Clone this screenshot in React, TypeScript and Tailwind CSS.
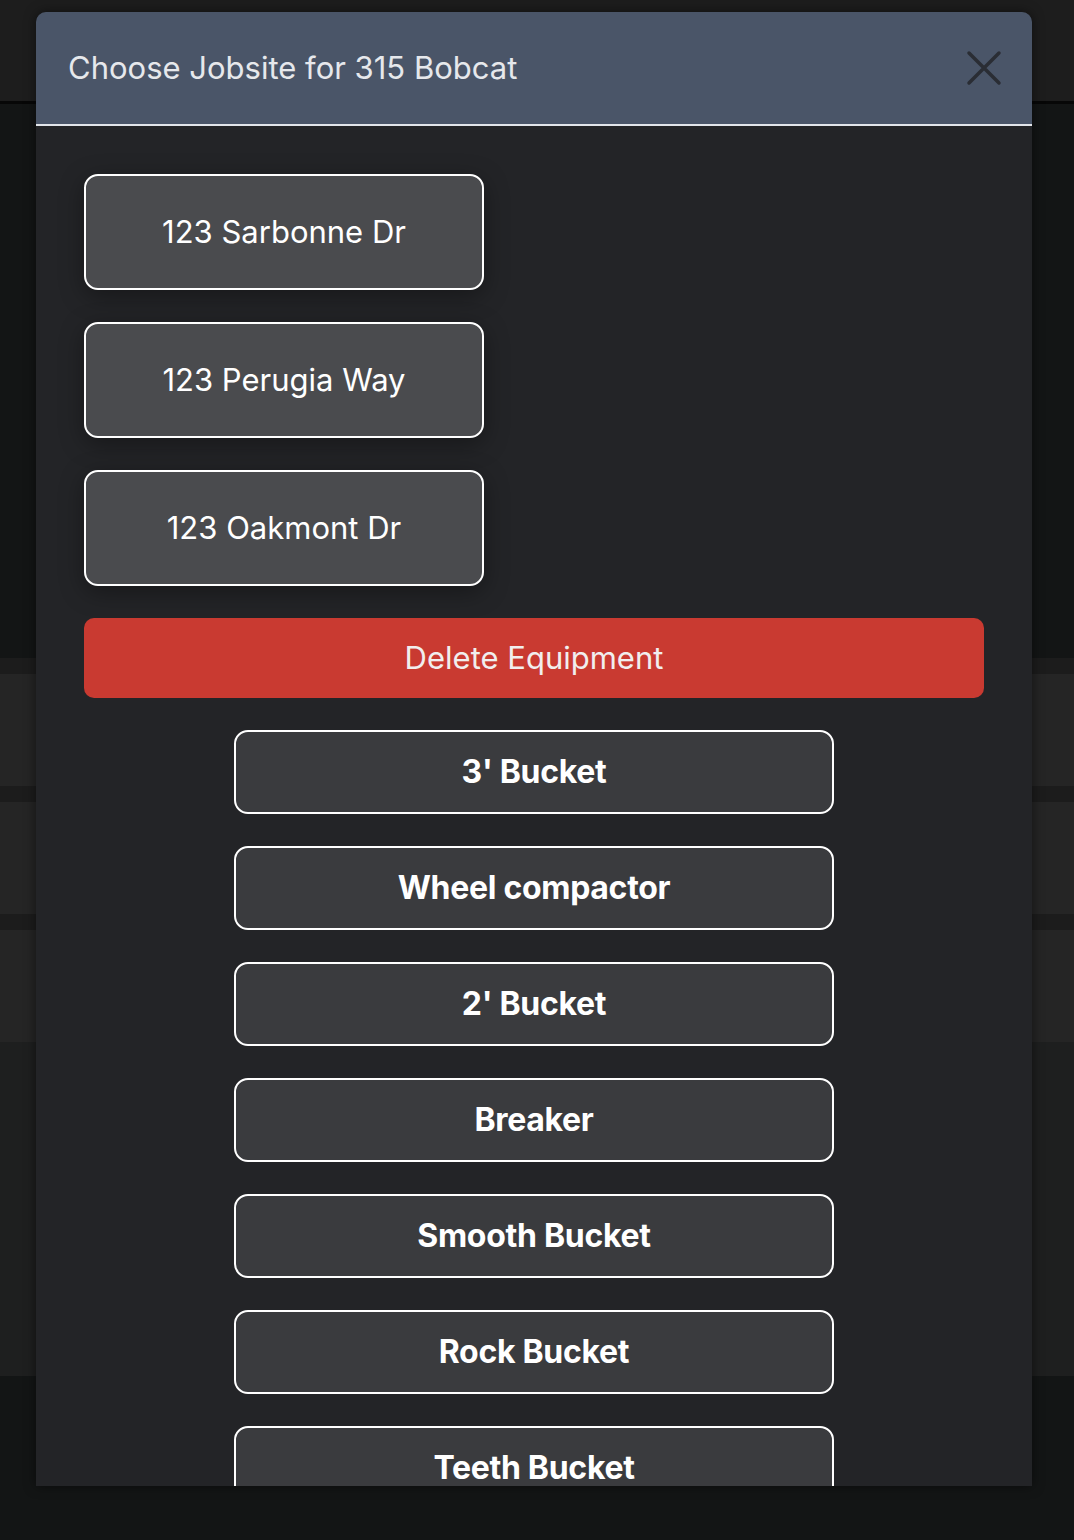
import React from 'react';

const jobsites = ['123 Sarbonne Dr', '123 Perugia Way', '123 Oakmont Dr'];
const equipment = [
  "3' Bucket",
  'Wheel compactor',
  "2' Bucket",
  'Breaker',
  'Smooth Bucket',
  'Rock Bucket',
  'Teeth Bucket',
];

const Backdrop: React.FC = () => (
  <div className="flex flex-col">
    <div className="h-[101px] bg-[#1d1d1d]" />
    <div className="h-[3px] bg-[#070707]" />
    <div className="h-[554px]" />
    <div className="h-[16px] bg-[#1c1c1c]" />
    <div className="h-[112px] bg-[#252525]" />
    <div className="h-[16px] bg-[#1c1c1c]" />
    <div className="h-[112px] bg-[#252525]" />
    <div className="h-[16px] bg-[#1c1c1c]" />
    <div className="h-[112px] bg-[#252525]" />
    <div className="h-[334px] bg-[#1e1f1f]" />
  </div>
);

const App: React.FC = () => {
  return (
    <div
      className="relative w-full h-[1540px] overflow-hidden bg-[#131515]"
      style={{ fontFamily: 'Inter, "Noto Sans", sans-serif' }}
    >
      <Backdrop />

      <div className="absolute left-[36px] top-[12px] w-[996px] h-[1474px] overflow-hidden rounded-t-[10px] bg-[#232427] shadow-[0_0_12px_rgba(0,0,0,0.5)]">
        <div className="flex items-center justify-between h-[114px] pl-[32px] pr-[30px] bg-[#4a5568] border-b-2 border-[#e2e5ea]">
          <h2 className="text-[31px] text-[#e6e8ec]">Choose Jobsite for 315 Bobcat</h2>
          <button className="w-[36px] h-[36px] flex items-center justify-center">
            <svg width="36" height="36" viewBox="0 0 36 36" fill="none">
              <path d="M3 3L33 33M33 3L3 33" stroke="#2a2d34" strokeWidth="3.5" strokeLinecap="round" />
            </svg>
          </button>
        </div>

        <div className="flex flex-col px-[48px] pt-[48px]">
          <div className="flex flex-col gap-[32px]">
            {jobsites.map((site) => (
              <button
                key={site}
                className="w-[400px] h-[116px] rounded-[14px] border-2 border-white bg-[#4a4b4e] text-white text-[31px] shadow-[0_6px_24px_rgba(0,0,0,0.35)]"
              >
                {site}
              </button>
            ))}
          </div>

          <button className="mt-[32px] w-full h-[80px] rounded-[10px] bg-[#c93a31] text-[#f1eeee] text-[31px]">
            Delete Equipment
          </button>

          <div className="mt-[32px] flex flex-col items-center gap-[32px]">
            {equipment.map((item) => (
              <button
                key={item}
                className="w-[600px] h-[84px] shrink-0 rounded-[14px] border-2 border-white bg-[#3a3b3e] text-white text-[32px] font-bold tracking-[-0.3px]"
              >
                {item}
              </button>
            ))}
          </div>
        </div>
      </div>
    </div>
  );
};

export default App;
